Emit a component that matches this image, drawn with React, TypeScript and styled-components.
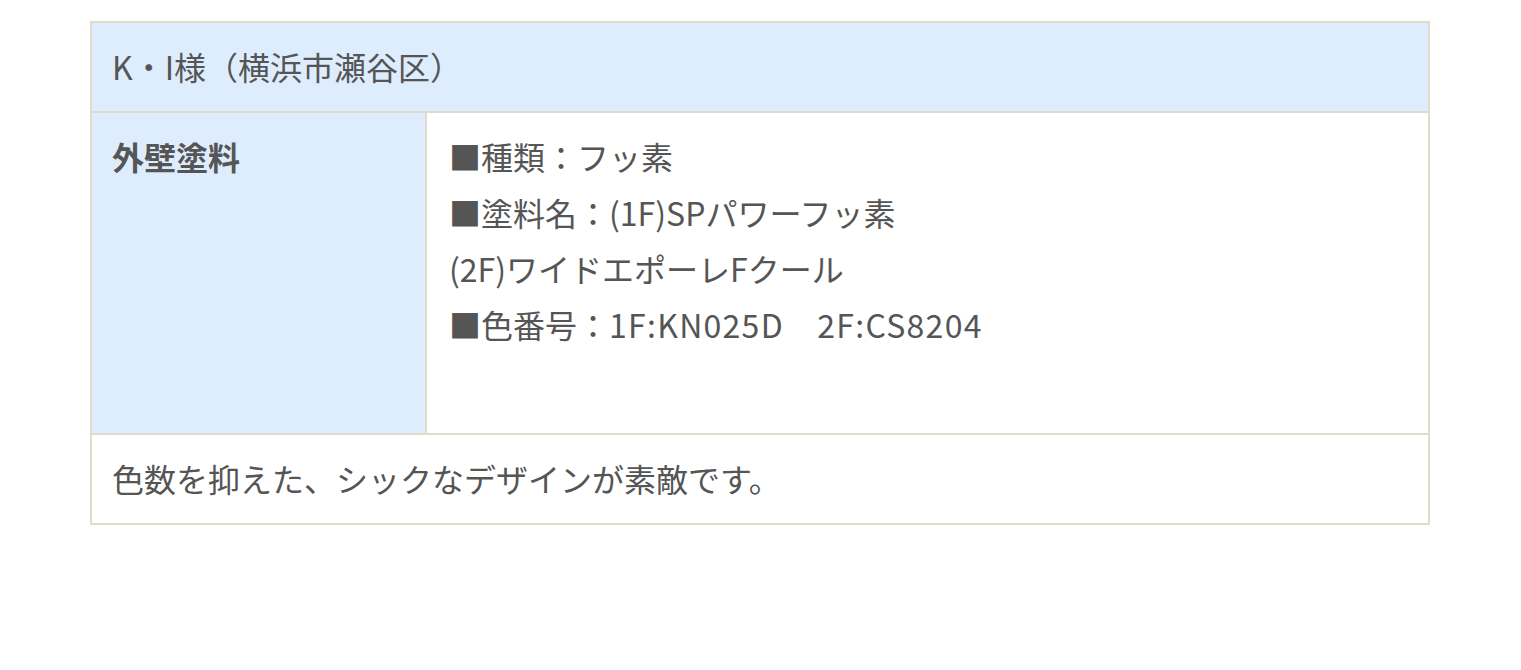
import React from "react";
import styled, { createGlobalStyle } from "styled-components";

const Global = createGlobalStyle`
  html, body { margin: 0; padding: 0; background: #fff; }
  body {
    font-family: "Noto Sans CJK JP", "Noto Sans", sans-serif;
    color: #555;
  }
`;

const Page = styled.div`
  padding: 21px 91px 0 90px;
`;

const Table = styled.table`
  width: 1340px;
  border-collapse: collapse;
  table-layout: fixed;
  font-size: 32px;
  line-height: 56px;
  color: #555;
`;

const HeadCell = styled.th<{ $bold?: boolean }>`
  background: #deedfe;
  border: 2px solid #e2dacb;
  padding: 15px 20px 17px;
  text-align: left;
  vertical-align: top;
  font-weight: ${(p) => (p.$bold ? 700 : 400)};
`;

const Cell = styled.td<{ $tall?: boolean }>`
  background: #fff;
  border: 2px solid #e2dacb;
  padding: ${(p) => (p.$tall ? "15px 20px 81px 22px" : "15px 20px 17px")};
  text-align: left;
  vertical-align: top;
`;

const Line = styled.div`
  white-space: pre;
`;

const Latin = styled.span`
  letter-spacing: 0.04em;
`;

export default function App() {
  return (
    <>
      <Global />
      <Page>
        <Table>
          <colgroup>
            <col style={{ width: "335px" }} />
            <col />
          </colgroup>
          <tbody>
            <tr>
              <HeadCell colSpan={2}>K・I様（横浜市瀬谷区）</HeadCell>
            </tr>
            <tr>
              <HeadCell $bold>外壁塗料</HeadCell>
              <Cell $tall>
                <Line>■種類：フッ素</Line>
                <Line>■塗料名：(1F)SPパワーフッ素</Line>
                <Line>(2F)ワイドエポーレFクール</Line>
                <Line>
                  ■色番号：<Latin>1F:KN025D　2F:CS8204</Latin>
                </Line>
              </Cell>
            </tr>
            <tr>
              <Cell colSpan={2}>色数を抑えた、シックなデザインが素敵です。</Cell>
            </tr>
          </tbody>
        </Table>
      </Page>
    </>
  );
}
